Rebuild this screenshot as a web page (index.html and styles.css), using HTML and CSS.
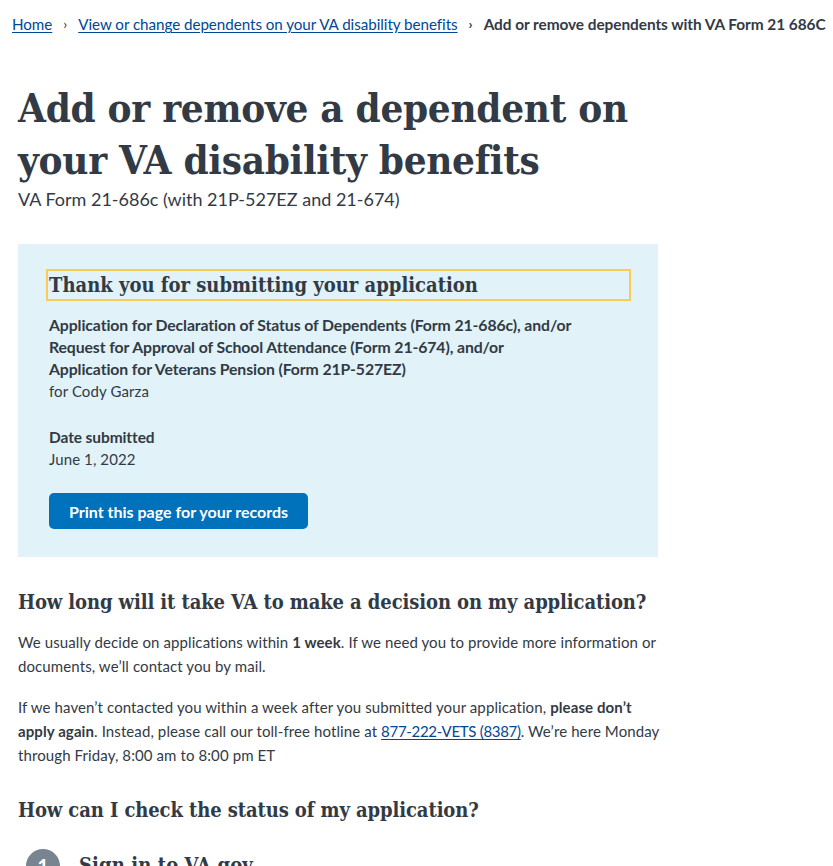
FILE: index.html
```html
<!DOCTYPE html>
<html lang="en">
<head>
<meta charset="utf-8">
<title>Add or remove a dependent on your VA disability benefits</title>
<link rel="stylesheet" href="styles.css">
</head>
<body>
<nav class="breadcrumbs" aria-label="Breadcrumb">
  <ol class="breadcrumbs__list">
    <li class="breadcrumbs__item"><a href="#" class="link">Home</a></li>
    <li class="breadcrumbs__item"><a href="#" class="link">View or change dependents on your VA disability benefits</a></li>
    <li class="breadcrumbs__item breadcrumbs__item--current">Add or remove dependents with VA Form 21 686C</li>
  </ol>
</nav>
<main class="content">
  <h1 class="page-title">Add or remove a dependent on your VA disability benefits</h1>
  <p class="subtitle">VA Form 21-686c (with 21P-527EZ and 21-674)</p>

  <div class="confirmation">
    <h2 class="confirmation__title">Thank you for submitting your application</h2>
    <p class="confirmation__forms">Application for Declaration of Status of Dependents (Form 21-686c), and/or<br>Request for Approval of School Attendance (Form 21-674), and/or<br>Application for Veterans Pension (Form 21P-527EZ)</p>
    <p class="confirmation__name">for Cody Garza</p>
    <p class="confirmation__label">Date submitted</p>
    <p class="confirmation__value">June 1, 2022</p>
    <button class="button" type="button">Print this page for your records</button>
  </div>

  <section class="info">
    <h2 class="section-title">How long will it take VA to make a decision on my application?</h2>
    <p class="text">We usually decide on applications within <strong>1 week</strong>. If we need you to provide more information or documents, we’ll contact you by mail.</p>
    <p class="text">If we haven’t contacted you within a week after you submitted your application, <strong>please don’t apply again</strong>. Instead, please call our toll-free hotline at <a href="#" class="link link--phone">877-222-VETS (8387)</a>. We’re here Monday through Friday, 8:00 am to 8:00 pm ET</p>
  </section>

  <section class="info">
    <h2 class="section-title section-title--spaced">How can I check the status of my application?</h2>
    <ol class="process">
      <li class="process__step"><span class="process__num">1</span><h3 class="process__title">Sign in to VA.gov</h3></li>
    </ol>
  </section>
</main>
</body>
</html>
```
FILE: styles.css
```css
* { box-sizing: border-box; }
html, body { margin: 0; padding: 0; background: #fff; }
body {
  font-family: Lato, "Liberation Sans", sans-serif;
  font-size: 15px;
  letter-spacing: 0.1px;
  color: #323a45;
  overflow: hidden;
}
.link { color: #004795; text-decoration: underline; text-underline-offset: 2px; }
.link--phone { letter-spacing: -0.3px; }
strong { font-weight: 700; }

.breadcrumbs { padding: 13px 0 0 12px; font-size: 15.2px; letter-spacing: -0.05px; }
.breadcrumbs__list { list-style: none; margin: 0; padding: 0; display: flex; flex-wrap: nowrap; white-space: nowrap; line-height: 22px; }
.breadcrumbs__item { display: flex; }
.breadcrumbs__item + .breadcrumbs__item::before {
  content: "›"; color: #323a45; margin: 0 11px 0 11px; font-size: 14px;
}
.breadcrumbs__item--current { font-weight: 700; font-size: 15.4px; }

.content { width: 658px; padding-left: 18px; }

.page-title {
  font-family: "DejaVu Serif", serif;
  font-stretch: condensed;
  font-weight: 700;
  font-size: 40px;
  line-height: 52px;
  letter-spacing: -0.3px;
  margin: 47px 0 0;
}
.subtitle { font-size: 18px; line-height: 26px; letter-spacing: 0; margin: 0 0 32px; }

.confirmation { background: #e1f3f8; padding: 28px 30px 28px 31px; }
.confirmation__title {
  font-family: "DejaVu Serif", serif; font-stretch: condensed; font-weight: 700;
  font-size: 20px; line-height: 26px; margin: 0 0 16px; letter-spacing: 0;
  outline: 2px solid #facc53; outline-offset: 1px;
}
.confirmation p { margin: 0; line-height: 22px; }
.confirmation__forms { font-weight: 700; font-size: 15.8px; letter-spacing: -0.1px; }
.confirmation__label { font-weight: 700; margin-top: 24px !important; letter-spacing: -0.1px; font-size: 15.5px; }
.confirmation__value { margin-bottom: 23px !important; }
.button {
  font-family: inherit; font-size: 16px; font-weight: 700; color: #fff; letter-spacing: 0;
  background: #0071bb; border: 0; border-radius: 5px;
  height: 36px; padding: 0 20px; cursor: pointer;
}

.section-title {
  font-family: "DejaVu Serif", serif; font-stretch: condensed; font-weight: 700;
  font-size: 20px; line-height: 26px; margin: 32px 0 15px; letter-spacing: -0.1px;
}
.section-title--spaced { margin-top: 30px; }
.text { margin: 0 -10px 17px 0; line-height: 24px; }

.process { list-style: none; margin: 26px 0 0; padding: 0 0 0 8px; }
.process__step { display: flex; align-items: flex-start; gap: 19px; }
.process__num {
  width: 34px; height: 34px; border-radius: 50%; background: #788590; color: #fff;
  font-weight: 700; font-size: 20px; display: flex; align-items: center; justify-content: center; flex: none;
}
.process__title { font-family: "DejaVu Serif", serif; font-stretch: condensed; font-weight: 700; font-size: 20px; line-height: 26px; margin: 3px 0 0; }
```
